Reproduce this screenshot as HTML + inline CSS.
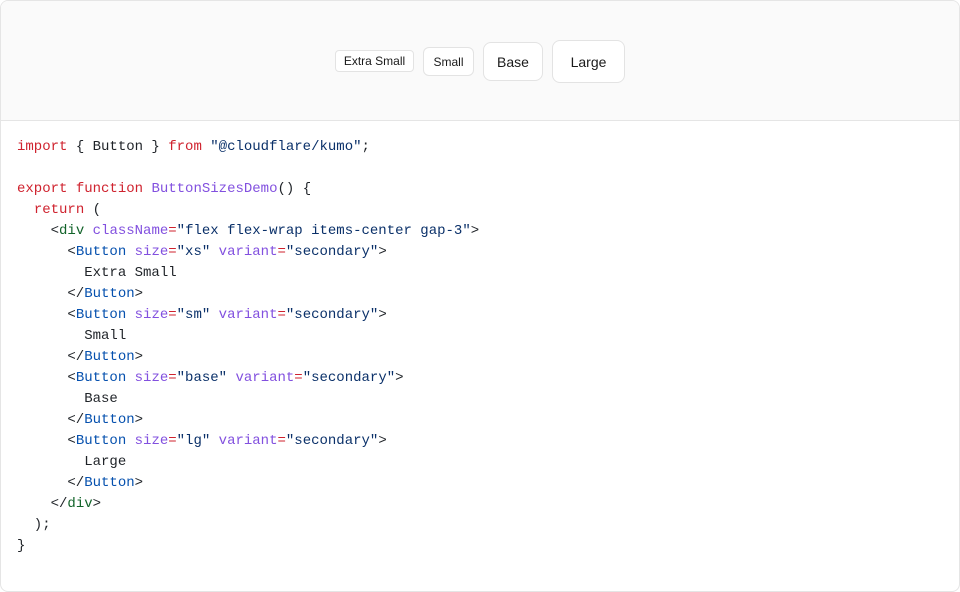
<!DOCTYPE html>
<html><head><style>
html,body{margin:0;padding:0;background:#fff;width:960px;height:573px;overflow:hidden}
.card{position:absolute;left:0;top:0;width:958px;height:590px;border:1px solid #e5e5e5;border-radius:8px;overflow:hidden;background:#fff}
.top{height:119px;background:#fafafa;border-bottom:1px solid #e5e5e5;position:relative}
.b{position:absolute;box-sizing:border-box;border:1px solid #e3e3e3;background:#fff;font-family:"Liberation Sans",sans-serif;color:#1a1a1a;display:flex;align-items:center;justify-content:center}
pre{margin:0;position:absolute;left:16px;top:136px;font-family:"Liberation Mono",monospace;font-size:14px;line-height:21px;color:#1f2328}
.k{color:#cf222e}.f{color:#8250df}.s{color:#0a3069}.t{color:#116329}.c{color:#0550ae}
</style></head><body>
<div class="card">
<div class="top">
<div class="b" style="left:334px;top:49px;width:79px;height:22px;font-size:12px;border-radius:4px">Extra Small</div>
<div class="b" style="left:422px;top:46px;width:51px;height:29px;font-size:12px;border-radius:6px">Small</div>
<div class="b" style="left:482px;top:41px;width:60px;height:39px;font-size:14px;border-radius:8px">Base</div>
<div class="b" style="left:551px;top:39px;width:73px;height:43px;font-size:14px;border-radius:8px">Large</div>
</div>
<pre><span class="k">import</span> { Button } <span class="k">from</span> <span class="s">"@cloudflare/kumo"</span>;

<span class="k">export</span> <span class="k">function</span> <span class="f">ButtonSizesDemo</span>() {
  <span class="k">return</span> (
    &lt;<span class="t">div</span> <span class="f">className</span><span class="k">=</span><span class="s">"flex flex-wrap items-center gap-3"</span>&gt;
      &lt;<span class="c">Button</span> <span class="f">size</span><span class="k">=</span><span class="s">"xs"</span> <span class="f">variant</span><span class="k">=</span><span class="s">"secondary"</span>&gt;
        Extra Small
      &lt;/<span class="c">Button</span>&gt;
      &lt;<span class="c">Button</span> <span class="f">size</span><span class="k">=</span><span class="s">"sm"</span> <span class="f">variant</span><span class="k">=</span><span class="s">"secondary"</span>&gt;
        Small
      &lt;/<span class="c">Button</span>&gt;
      &lt;<span class="c">Button</span> <span class="f">size</span><span class="k">=</span><span class="s">"base"</span> <span class="f">variant</span><span class="k">=</span><span class="s">"secondary"</span>&gt;
        Base
      &lt;/<span class="c">Button</span>&gt;
      &lt;<span class="c">Button</span> <span class="f">size</span><span class="k">=</span><span class="s">"lg"</span> <span class="f">variant</span><span class="k">=</span><span class="s">"secondary"</span>&gt;
        Large
      &lt;/<span class="c">Button</span>&gt;
    &lt;/<span class="t">div</span>&gt;
  );
}</pre>
</div>
</body></html>
